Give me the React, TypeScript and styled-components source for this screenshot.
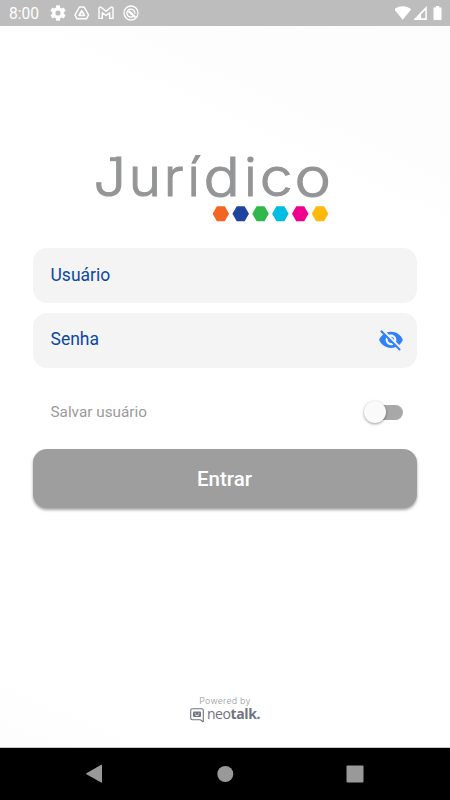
import React from "react";
import styled, { createGlobalStyle } from "styled-components";

const GlobalStyle = createGlobalStyle`
  *, *::before, *::after { box-sizing: border-box; }
  html, body { margin: 0; padding: 0; }
  body { font-family: Roboto, "Noto Sans", sans-serif; }
  svg { display: block; flex: none; }
`;

const Screen = styled.div`
  width: 450px;
  height: 800px;
  display: flex;
  flex-direction: column;
  overflow: hidden;
  background: #fff;
`;

const StatusBar = styled.header`
  height: 26px;
  flex: none;
  display: flex;
  align-items: center;
  justify-content: space-between;
  padding: 0 6px 0 9px;
  background: #bdbdbd;
  color: #fff;
`;

const StatusGroup = styled.div<{ $gap: number }>`
  display: flex;
  align-items: center;
  gap: ${(p) => p.$gap}px;
`;

const Clock = styled.span`
  width: 32px;
  font-size: 15.6px;
  line-height: 26px;
  padding-top: 1px;
`;

const Main = styled.main`
  flex: 1;
  display: flex;
  flex-direction: column;
  padding: 124px 33px 0;
  background: linear-gradient(205deg, #fcfcfc 0%, #fdfdfd 14%, #fff 24%, #fff 90%, #fdfdfd 100%);
  border-bottom: 1px solid #c8c8c8;
`;

const Logo = styled.svg`
  margin-left: 57px;
  overflow: visible;
`;

const Form = styled.form`
  display: flex;
  flex-direction: column;
  margin-top: 18px;
`;

const Field = styled.label`
  height: 55px;
  display: flex;
  align-items: center;
  justify-content: space-between;
  margin-bottom: 9.5px;
  padding: 0 13px 2px 17.5px;
  border-radius: 14px;
  background: #f4f4f4;
  color: #0d47a1;
  font-size: 17.5px;
`;

const SaveRow = styled.div`
  height: 30px;
  display: flex;
  align-items: center;
  justify-content: space-between;
  margin-top: 20px;
  padding: 0 14px 0 17.5px;
  color: #9a9a9a;
  font-size: 15.3px;
`;

const Track = styled.span`
  width: 35px;
  height: 15px;
  display: flex;
  align-items: center;
  border-radius: 8px;
  background: #a8a8a8;
`;

const Thumb = styled.span`
  width: 22px;
  height: 22px;
  flex: none;
  margin-left: -4.5px;
  border-radius: 50%;
  background: #fafafa;
  box-shadow: 0 1px 3px rgba(0, 0, 0, 0.4);
`;

const SubmitButton = styled.button`
  height: 59px;
  margin-top: 22px;
  padding: 0 1px 0 0;
  border: 0;
  border-radius: 14px;
  background: #9e9e9e;
  box-shadow: 0 2px 3px rgba(0, 0, 0, 0.36);
  color: #fff;
  font-family: inherit;
  font-size: 20.5px;
  font-weight: 500;
`;

const Footer = styled.footer`
  display: flex;
  flex-direction: column;
  align-items: center;
  margin-top: auto;
  padding-bottom: 23px;
`;

const Powered = styled.span`
  font-family: Inter, sans-serif;
  font-size: 8.9px;
  font-weight: 300;
  line-height: 11px;
  letter-spacing: 0.25px;
  color: #96989e;
`;

const Brand = styled.div`
  display: flex;
  align-items: center;
  gap: 3px;
  height: 18px;
  font-family: "Open Sans", sans-serif;
  font-size: 14px;
  line-height: 16px;
  color: #6f7480;
  letter-spacing: -0.4px;
`;

const Wordmark = styled.span`
  display: block;
  padding-bottom: 2px;
  font-weight: 400;
`;

const Strong = styled.b`
  font-weight: 700;
`;

const NavBar = styled.nav`
  height: 52px;
  flex: none;
  display: flex;
  align-items: center;
  justify-content: space-between;
  padding: 0 86px 0 85px;
  background: #000;
`;

type Letter = { char: string; x: number; sx: number };

const letters: Letter[] = [
  { char: "J", x: 3.5, sx: 1.08 },
  { char: "u", x: 38.8, sx: 1.03 },
  { char: "r", x: 73.8, sx: 1.04 },
  { char: "í", x: 97.6, sx: 1 },
  { char: "d", x: 113.6, sx: 1.14 },
  { char: "i", x: 154.3, sx: 1 },
  { char: "c", x: 169.8, sx: 1.11 },
  { char: "o", x: 204.6, sx: 1.16 },
];

const hexagons = ["#f36523", "#1e449f", "#30b84a", "#00bde2", "#f0008c", "#ffb80c"];

function JuridicoLogo() {
  return (
    <Logo width="245" height="80" viewBox="0 0 245 80" role="img" aria-label="Jurídico">
      <g fill="#949596" fontFamily="Inter, sans-serif" fontSize="53" fontWeight="300" stroke="#949596" strokeWidth="1.1">
        {letters.map((l) => (
          <text key={l.x} transform={`translate(${l.x} 46.3) scale(${l.sx} 1)`}>
            {l.char}
          </text>
        ))}
      </g>
      <path d="M20 7.2H31V11.2H20z" fill="#949596" />
      {hexagons.map((color, i) => (
        <path
          key={color}
          transform={`translate(${122.6 + i * 19.85} 56)`}
          d="M4.3 .3H12.2L16.5 7.8L12.2 15.3H4.3L0 7.8Z"
          fill={color}
        />
      ))}
    </Logo>
  );
}

export default function App() {
  return (
    <>
      <GlobalStyle />
      <Screen>
        <StatusBar>
          <StatusGroup $gap={8.5}>
            <Clock>8:00</Clock>
            <svg width="16" height="16" viewBox="2 2 20 20" fill="#fff">
              <path d="M19.14 12.94c.04-.3.06-.61.06-.94s-.02-.64-.07-.94l2.03-1.58a.49.49 0 0 0 .12-.61l-1.92-3.32a.49.49 0 0 0-.59-.22l-2.39.96a7 7 0 0 0-1.62-.94l-.36-2.54A.48.48 0 0 0 13.92 2.4h-3.84a.48.48 0 0 0-.47.41l-.36 2.54c-.59.24-1.13.57-1.62.94l-2.39-.96a.48.48 0 0 0-.59.22L2.74 8.87a.48.48 0 0 0 .12.61l2.03 1.58a6.3 6.3 0 0 0 0 1.88l-2.03 1.58a.49.49 0 0 0-.12.61l1.92 3.32c.12.22.37.29.59.22l2.39-.96c.5.38 1.03.7 1.62.94l.36 2.54c.05.24.24.41.48.41h3.84c.24 0 .44-.17.47-.41l.36-2.54a7 7 0 0 0 1.62-.94l2.39.96c.22.08.47 0 .59-.22l1.92-3.32a.48.48 0 0 0-.12-.61zM12 15.2a3.2 3.2 0 1 1 0-6.4 3.2 3.2 0 0 1 0 6.4z" />
            </svg>
            <svg width="15.5" height="16" viewBox="0 0 16 16" fill="none" stroke="#fff" strokeWidth="1.5" strokeLinejoin="round">
              <path d="M5.6 1.8h4.8L15 10l-2.1 4H3.1L1 10z" />
              <path d="M8 5.7l2.8 4.9H5.2z" strokeWidth="1.7" />
            </svg>
            <svg width="16" height="14" viewBox="0 0 16 14" fill="none" stroke="#fff" strokeWidth="1.4" strokeLinejoin="round">
              <path d="M1 2.2C1 .9 2.4.7 3.2 1.4L8 5.2l4.8-3.8C13.6.7 15 .9 15 2.2V12.4H11.7V6.6L8 9.5 4.3 6.6v5.8H1z" />
            </svg>
            <svg width="16" height="16" viewBox="0 0 16 16" fill="none" stroke="#fff">
              <circle cx="8" cy="8" r="7" strokeWidth="1.3" />
              <path d="M10.4 11.2A4 4 0 1 1 11.8 8.6" strokeWidth="1.4" />
              <path d="M8.2 8.2L12.4 12.4" strokeWidth="2" />
              <path d="M4.4 6.8L6.6 5.4L10 8.6L8.6 10z" fill="#fff" stroke="none" />
            </svg>
          </StatusGroup>
          <StatusGroup $gap={2}>
            <svg width="17" height="14" viewBox="0 0 17 14" fill="#fff">
              <path d="M-.8 3.2C4.2 -.9 11.2 -.9 16.2 3.2L7.7 13.8z" />
            </svg>
            <svg width="14" height="14" viewBox="0 0 14 14">
              <path d="M12.8 0V14H-.8z" fill="#fff" />
              <path d="M11.3 4.2V12.3H7.1V8.2z" fill="#bdbdbd" />
            </svg>
            <svg width="14" height="14" viewBox="0 0 14 14" fill="#fff">
              <path d="M5.8 0h3.4v1.4h2.3V13.2a.8.8 0 0 1-.8.8H4.3a.8.8 0 0 1-.8-.8V1.4h2.3z" />
            </svg>
          </StatusGroup>
        </StatusBar>

        <Main>
          <JuridicoLogo />
          <Form onSubmit={(e) => e.preventDefault()}>
            <Field>Usuário</Field>
            <Field>
              Senha
              <svg width="26" height="26" viewBox="0 -0.8 24 24" fill="#2f80fa">
                <path d="M12 7c2.76 0 5 2.24 5 5 0 .65-.13 1.26-.36 1.83l2.92 2.92c1.51-1.26 2.7-2.89 3.43-4.75-1.73-4.39-6-7.5-11-7.5-1.4 0-2.74.25-3.98.7l2.16 2.16C10.74 7.13 11.35 7 12 7zM2 4.27l2.28 2.28.46.46C3.08 8.3 1.78 10.02 1 12c1.73 4.39 6 7.5 11 7.5 1.55 0 3.03-.3 4.38-.84l.42.42L19.73 22 21 20.73 3.27 3 2 4.27zM7.53 9.8l1.55 1.55c-.05.21-.08.43-.08.65 0 1.66 1.34 3 3 3 .22 0 .44-.03.65-.08l1.55 1.55c-.67.33-1.41.53-2.2.53-2.76 0-5-2.24-5-5 0-.79.2-1.53.53-2.2zm4.31-.78l3.15 3.15.02-.16c0-1.66-1.34-3-3-3l-.17.01z" />
              </svg>
            </Field>
            <SaveRow>
              Salvar usuário
              <Track role="switch" aria-checked="false">
                <Thumb />
              </Track>
            </SaveRow>
            <SubmitButton>Entrar</SubmitButton>
          </Form>
          <Footer>
            <Powered>Powered by</Powered>
            <Brand>
              <svg width="14" height="15" viewBox="0 0 14 15" fill="none" stroke="#6f7480">
                <path d="M13.3 14V2.5Q13.3 .8 11.6 .8H2.4Q.7 .8 .7 2.5V10Q.7 11.7 2.4 11.7H10.4L13.3 14" strokeWidth="1.1" />
                <rect x="3" y="3.4" width="8" height="5.6" rx="1" fill="#6f7480" stroke="none" />
                <path d="M4.7 5.3h1M8.3 5.3h1M5 6.9Q7 8.3 9 6.9" stroke="#fff" strokeWidth=".9" />
              </svg>
              <Wordmark>
                neo<Strong>talk.</Strong>
              </Wordmark>
            </Brand>
          </Footer>
        </Main>

        <NavBar>
          <svg width="18" height="20" viewBox="0 0 18 20" fill="#999">
            <path d="M17 1.2V18.2Q17 19 16.2 18.6L1.4 10.3Q.7 9.8 1.4 9.3L16.2 .8Q17 .4 17 1.2z" />
          </svg>
          <svg width="18" height="18" viewBox="0 0 18 18" fill="#999">
            <circle cx="9.3" cy="9" r="8" />
          </svg>
          <svg width="18" height="18" viewBox="0 0 18 18" fill="#999">
            <rect x=".5" y=".5" width="17" height="17" rx="1" />
          </svg>
        </NavBar>
      </Screen>
    </>
  );
}
